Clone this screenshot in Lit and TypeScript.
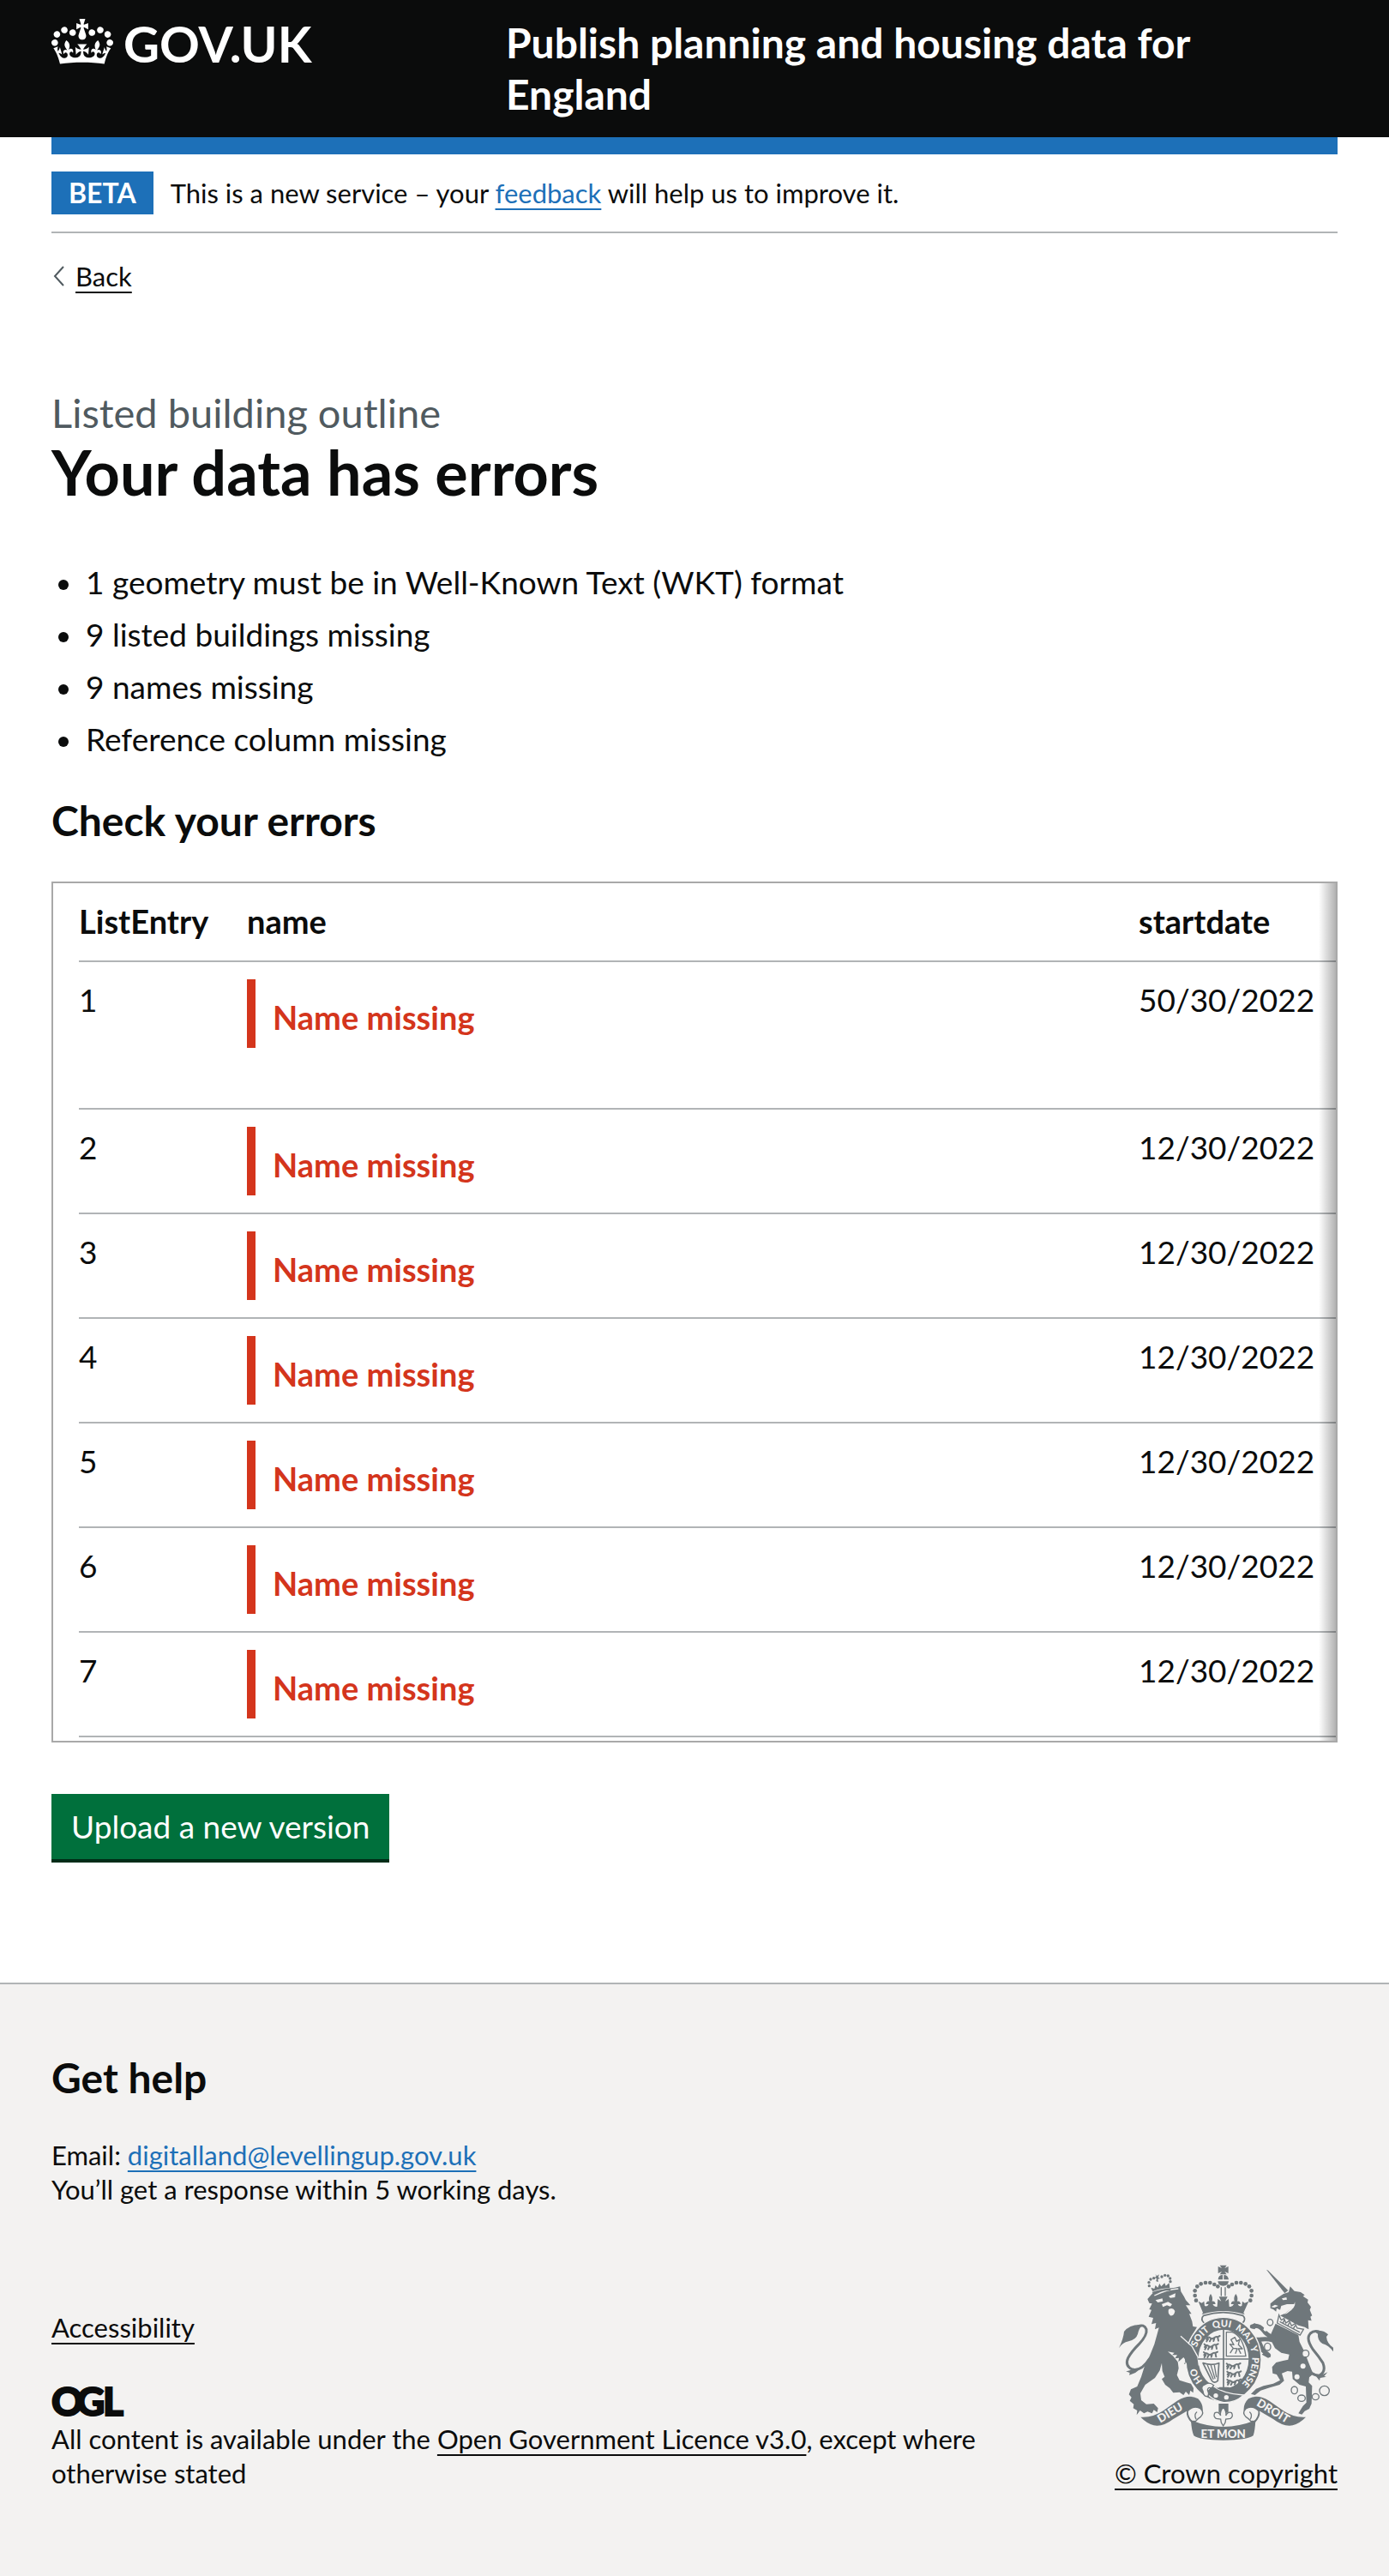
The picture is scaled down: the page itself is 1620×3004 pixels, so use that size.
import { LitElement, html, css, svg } from "lit";
import { customElement } from "lit/decorators.js";

interface EntryRow {
  entry: string;
  startDate: string;
  tall?: boolean;
}

const ISSUES = [
  "1 geometry must be in Well-Known Text (WKT) format",
  "9 listed buildings missing",
  "9 names missing",
  "Reference column missing",
];

const ROWS: EntryRow[] = [
  { entry: "1", startDate: "50/30/2022", tall: true },
  { entry: "2", startDate: "12/30/2022" },
  { entry: "3", startDate: "12/30/2022" },
  { entry: "4", startDate: "12/30/2022" },
  { entry: "5", startDate: "12/30/2022" },
  { entry: "6", startDate: "12/30/2022" },
  { entry: "7", startDate: "12/30/2022" },
];

const linkStyles = css`
  a {
    color: #0b0c0c;
    text-decoration: underline;
    text-decoration-thickness: 2px;
    text-underline-offset: 6px;
  }
  a:focus {
    outline: 6px solid #ffdd00;
    background: #ffdd00;
    color: #0b0c0c;
  }
  .link-blue {
    color: #1d70b8;
  }
`;

@customElement("gov-header")
export class GovHeader extends LitElement {
  static styles = css`
    :host {
      display: block;
      background: #0b0c0c;
      color: #fff;
      padding: 0 60px;
    }
    .inner {
      display: grid;
      grid-template-columns: 1fr 2fr;
      align-items: start;
    }
    .brand {
      display: flex;
      align-items: center;
      gap: 12px;
      padding-top: 16px;
      color: #fff;
      text-decoration: none;
      font-size: 58px;
      line-height: 70px;
      font-weight: 700;
    }
    .crown {
      width: 72px;
      height: 53px;
      margin-bottom: 6px;
      fill: #fff;
    }
    .service {
      padding: 20px 0 20px 30px;
      color: #fff;
      text-decoration: none;
      font-size: 48px;
      line-height: 60px;
      font-weight: 700;
    }
    .bar {
      height: 20px;
      background: #1d70b8;
      margin-bottom: -20px;
    }
  `;
  render() {
    return html`
      <header>
        <div class="inner">
          <a class="brand" href="#home">
            <svg class="crown" viewBox="0 0 132 97" aria-hidden="true">
              <path
                d="M25 30.2c3.5 1.5 7.7-.2 9.1-3.7 1.5-3.6-.2-7.8-3.9-9.2-3.6-1.4-7.6.3-9.1 3.9-1.4 3.5.3 7.5 3.9 9zM9 39.5c3.6 1.5 7.8-.2 9.2-3.7 1.5-3.6-.2-7.8-3.9-9.1-3.6-1.5-7.6.2-9.1 3.8-1.4 3.5.3 7.5 3.8 9zM4.4 57.2c3.5 1.5 7.7-.2 9.1-3.8 1.5-3.6-.2-7.7-3.9-9.1-3.5-1.5-7.6.3-9.1 3.8-1.4 3.5.3 7.6 3.9 9.1zm38.3-21.4c3.5 1.5 7.7-.2 9.1-3.8 1.5-3.6-.2-7.7-3.9-9.1-3.6-1.5-7.6.3-9.1 3.8-1.3 3.6.4 7.7 3.9 9.1zm64.4-5.6c-3.6 1.5-7.8-.2-9.1-3.7-1.5-3.6.2-7.8 3.8-9.2 3.6-1.4 7.7.3 9.2 3.9 1.3 3.5-.4 7.5-3.9 9zm15.9 9.3c-3.6 1.5-7.7-.2-9.1-3.7-1.5-3.6.2-7.8 3.7-9.1 3.6-1.5 7.7.2 9.2 3.8 1.5 3.5-.3 7.5-3.8 9zm4.7 17.7c-3.6 1.5-7.8-.2-9.2-3.8-1.5-3.6.2-7.7 3.9-9.1 3.6-1.5 7.7.3 9.2 3.8 1.3 3.5-.4 7.6-3.9 9.1zM89.3 35.8c-3.6 1.5-7.8-.2-9.2-3.8-1.4-3.6.2-7.7 3.9-9.1 3.6-1.5 7.7.3 9.2 3.8 1.4 3.6-.3 7.7-3.9 9.1zM69.7 17.7l8.9 4.7V9.3l-8.9 2.8c-.2-.3-.5-.6-.9-.9L72.4 0H59.6l3.5 11.2c-.3.3-.6.5-.9.9l-8.8-2.8v13.1l8.8-4.7c.3.3.6.7.9.9l-5 15.4v.1c-.2.8-.4 1.6-.4 2.4 0 4.1 3.1 7.5 7 8.1h.2c.3 0 .7.1 1 .1.4 0 .7 0 1-.1h.2c4-.6 7.1-4.1 7.1-8.1 0-.8-.1-1.7-.4-2.4V34l-5.1-15.4c.4-.2.7-.6 1-.9zM66 92.8c16.9 0 32.8 1.1 47.1 3.2 4-16.9 8.9-26.7 14-33.5l-9.6-3.4c1 4.9 1.1 7.2 0 10.2-1.5-1.4-3-4.3-4.2-8.7L108.6 76c2.8-2 5-3.2 7.5-3.3-4.4 9.4-10 11.9-13.6 11.2-4.3-.8-6.3-4.6-5.6-7.9 1-4.7 5.7-5.9 8-.5 4.3-8.7-3-11.4-7.6-8.8 7.1-7.2 7.9-13.5 2.1-21.1-8 6.1-8.1 12.3-4.5 20.8-4.7-5.4-12.1-2.5-9.5 6.2 3.4-5.2 7.9-2 7.2 3.1-.6 4.3-6.4 7.8-13.5 7.2-10.3-.9-10.9-8-11.2-13.8 2.5-.5 7.1 1.8 11 7.3L80.2 60c-4.1 4.4-8 5.3-12.3 5.4 1.4-4.4 8-11.6 8-11.6H55.5s6.4 7.2 7.9 11.6c-4.2-.1-8-1-12.3-5.4l1.4 16.4c3.9-5.5 8.5-7.7 10.9-7.3-.3 5.8-.9 12.8-11.1 13.8-7.2.6-12.9-2.9-13.5-7.2-.7-5 3.8-8.3 7.1-3.1 2.7-8.7-4.6-11.6-9.4-6.2 3.7-8.5 3.6-14.7-4.6-20.8-5.8 7.6-5 13.9 2.2 21.1-4.7-2.6-11.9.1-7.7 8.8 2.3-5.5 7.1-4.2 8.1.5.7 3.3-1.3 7.1-5.7 7.9-3.5.7-9-1.8-13.5-11.2 2.5.1 4.7 1.3 7.5 3.3l-4.7-15.4c-1.2 4.4-2.7 7.2-4.3 8.7-1.1-3-.9-5.3 0-10.2l-9.5 3.4c5 6.9 9.9 16.7 14 33.5 14.8-2.1 30.8-3.2 47.7-3.2z"
              />
            </svg>
            <span>GOV.UK</span>
          </a>
          <a class="service" href="#service">Publish planning and housing data for England</a>
        </div>
        <div class="bar"></div>
      </header>
    `;
  }
}

@customElement("error-table")
export class ErrorTable extends LitElement {
  static styles = css`
    :host {
      display: block;
      position: relative;
      border: 2px solid #a9a9a9;
    }
    .scroller {
      overflow-x: auto;
      padding: 0 0 4px 30px;
    }
    .shade {
      position: absolute;
      inset: 0 0 0 auto;
      width: 20px;
      background: linear-gradient(to right, transparent, rgba(0, 0, 0, 0.3));
      pointer-events: none;
    }
    table {
      width: 100%;
      table-layout: fixed;
      border-collapse: separate;
      border-spacing: 0;
    }
    .col-entry {
      width: 196px;
    }
    .col-date {
      width: 230px;
    }
    th,
    td {
      box-sizing: border-box;
      height: 122px;
      padding: 19px 0;
      border-bottom: 2px solid #b1b4b6;
      text-align: left;
      vertical-align: top;
      font-size: 37px;
      line-height: 50px;
      font-weight: 400;
    }
    th {
      height: 92px;
      font-size: 38px;
      font-weight: 700;
    }
    .tall td {
      height: 172px;
    }
    td.cell-error {
      padding-top: 20px;
    }
    .error {
      margin: 0;
      padding: 19px 0 11px 20px;
      border-left: 10px solid #d4351c;
      color: #d4351c;
      font-size: 38px;
      line-height: 50px;
      font-weight: 700;
    }
  `;
  render() {
    return html`
      <div class="scroller">
        <table aria-label="Errors by list entry">
          <colgroup>
            <col class="col-entry" />
            <col />
            <col class="col-date" />
          </colgroup>
          <thead>
            <tr>
              <th scope="col">ListEntry</th>
              <th scope="col">name</th>
              <th scope="col">startdate</th>
            </tr>
          </thead>
          <tbody>
            ${ROWS.map(
              (row) => html`
                <tr class=${row.tall ? "tall" : "regular"}>
                  <td>${row.entry}</td>
                  <td class="cell-error"><p class="error">Name missing</p></td>
                  <td>${row.startDate}</td>
                </tr>
              `
            )}
          </tbody>
        </table>
      </div>
      <div class="shade"></div>
    `;
  }
}

/* Half of the crown's pearls; the other half is mirrored about x = 437. */
const PEARLS = [
  [342, 183],
  [338, 166],
  [338, 149],
  [346, 134],
  [359, 125],
  [375, 121],
  [391, 121],
  [406, 127],
  [418, 134],
];

const LION_PEARLS = [
  [178, 132],
  [177, 120],
  [183, 109],
  [194, 105],
  [222, 100],
  [233, 95],
  [244, 97],
  [251, 106],
  [252, 117],
];

const RINGS = [
  [601, 260, 10, 11],
  [592, 345, 11, 13],
  [725, 369, 12, 12],
  [686, 497, 11, 13],
  [711, 525, 13, 11],
  [760, 520, 12, 11],
  [791, 499, 17, 17],
];

@customElement("royal-arms")
export class RoyalArms extends LitElement {
  static styles = css`
    :host {
      display: block;
      width: 250px;
    }
    svg {
      display: block;
      width: 100%;
      font-family: Lato, sans-serif;
      font-weight: 900;
    }
    .ink {
      fill: #6f777b;
    }
    .paper {
      fill: #f3f2f1;
    }
    .line {
      fill: none;
      stroke: #6f777b;
      stroke-width: 5;
      stroke-linecap: round;
      stroke-linejoin: round;
    }
    .fine {
      stroke-width: 4;
    }
    .beast {
      stroke-width: 6;
    }
    .tail {
      stroke-width: 9;
    }
    .leg {
      stroke-width: 15;
    }
    .gap {
      fill: none;
      stroke: #f3f2f1;
      stroke-width: 4;
    }
    .cut {
      stroke: #f3f2f1;
      stroke-width: 4;
    }
    .hollow {
      fill: #f3f2f1;
      stroke: #6f777b;
      stroke-width: 4;
    }
    .belt {
      font-size: 33px;
    }
    .motto {
      font-size: 40px;
    }
  `;

  private beasts(x: number, y: number) {
    return svg`<g transform="translate(${x} ${y})">
      <path class="line beast" d="M2 12q6-10 13-4t14 0 12-3l8-4M8 12l-5 8M18 12l-4 8M30 10l-3 9M42 8l2 10M6 6l-5-4" />
    </g>`;
  }

  private halfScroll() {
    return svg`
      <path class="ink" d="M148 591Q190 594 228 568L276 534Q318 508 349 527Q370 548 364 576Q344 552 318 565L262 598Q226 626 194 620Q168 612 148 591Z" />
      <path class="hollow" d="M312 570Q336 548 358 562Q372 576 358 590Q348 596 340 606Q334 604 328 606Q312 592 312 570Z" />
      <path class="line fine" d="M312 568Q306 590 330 612M344 574Q334 582 342 598" />`;
  }

  render() {
    return html`
      <svg viewBox="72 58 750 616" role="img" aria-label="Royal coat of arms">
        <defs>
          <path id="belt" d="M438 501A100 113 0 0 1 438 275A100 113 0 0 1 438 501" />
        </defs>

        <!-- lion tail -->
        <path class="line tail" d="M178 388Q150 432 118 424Q92 412 104 384Q116 362 142 336Q172 304 168 284Q160 264 138 274" />
        <path class="ink" d="M150 268Q110 266 90 292Q88 316 72 350Q84 330 106 326Q132 320 138 300Q142 282 150 274ZM88 428Q104 436 122 420L140 428Q132 436 120 440L108 444L110 436Z" />
        <!-- lion body -->
        <path
          class="ink"
          d="M190 158L236 142L268 138L286 134L289 152L300 170L306 182L322 200L306 200L326 230L318 230L328 256L331 274L345 276L336 292L328 306L320 318L330 340L344 364L351 392L347 414L338 404L335 418L326 406L318 416L314 402L300 406L306 392L298 382L280 398L282 384L268 386L276 374L258 374L266 366L243 362L262 378L278 398L281 420L275 444L284 462L308 470L324 474L333 490L332 506L322 498L318 514L306 502L298 514L284 504L262 506L250 490L234 478L222 458L232 450L224 430L222 402L215 428L198 454L164 478L147 508L150 532L168 546L194 544L209 560L206 574L194 566L188 578L172 572L160 578L146 568L134 584L136 568L122 560L124 546L110 534L116 522L107 512L114 494L136 484L150 450L162 412L180 376L196 336L206 300L212 278L198 284L202 262L186 266L192 244L176 240L186 216L178 214L188 194L178 192L172 178Z"
        />
        <path class="paper" d="M200 182L224 176L226 186L208 190ZM246 168L270 158L268 172L252 174ZM222 196L244 188L258 196L252 204L240 200L226 206ZM246 214Q262 206 268 220Q266 238 252 236Q242 228 246 214Z" />
        <path class="gap" d="M196 166Q240 144 280 142" />
        <!-- lion crown -->
        <path class="ink" d="M190 152L184 138L196 142L200 130L208 138L214 124L220 134L232 122L236 132L248 122L250 140Q218 140 190 152ZM192 160L188 154Q220 142 254 142L252 148Q220 148 192 160ZM200 90L204 98L212 92L210 102L216 106L208 108L210 118L202 116L204 106L196 104L202 100Z" />
        ${LION_PEARLS.map(([x, y]) => svg`<circle class="ink" cx=${x} cy=${y} r="5" />`)}

        <!-- unicorn tail -->
        <path class="line tail" d="M722 410Q742 444 772 446Q798 434 786 402Q772 380 752 356Q724 316 742 298Q756 286 776 294" />
        <path class="ink" d="M756 292Q784 282 804 302L798 310Q800 334 822 348L822 362Q806 340 784 334Q766 322 768 300ZM752 436L768 446Q786 444 802 434L790 448L798 450L776 454L774 464Z" />
        <!-- unicorn horn, head and mane -->
        <path class="ink" d="M588 75L594 78L664 148L652 158Z" />
        <path
          class="ink"
          d="M602 194L626 174L648 160L666 154L671 134L686 150L708 154L722 164L716 168L734 180L732 190L744 206L740 216L748 236L742 240L746 254L734 252L736 284L722 276L700 270L636 236L654 228L674 212L688 196L660 196L640 202L636 216L624 210L622 222L612 214L602 210Z"
        />
        <path class="paper" d="M642 176L658 172L660 180L646 182ZM604 206L618 198L630 202L616 208ZM688 188Q692 210 660 228L650 232Q684 206 688 188Z" />
        <!-- collar -->
        <path class="hollow" d="M632 234L640 252L650 246L656 262L668 254L676 272L688 264L696 280L718 284L706 304L626 262Z" />
        <path class="line fine" d="M636 258L704 294M650 252L646 262M668 262L664 270M688 272L682 282" />
        <!-- unicorn body -->
        <path
          class="ink"
          d="M620 264L700 304L704 328L722 364L734 396L746 426L752 440L738 452L736 470L748 482L746 544L738 562L722 570L712 582L700 578L716 552L728 540L726 484L704 478L680 458L678 432L662 430L642 438L650 464L634 478L600 488L568 498L548 514L534 510L552 492L578 482L612 474L636 462L624 442L610 438L608 416L622 400L646 394L664 390L668 372L640 366L618 350L606 326L604 300Z"
        />
        <path class="line leg" d="M612 312Q588 304 578 288Q560 266 538 274M612 322Q582 314 560 322L576 358L596 374" />
        <path class="ink" d="M530 278L546 262L560 272L546 284ZM584 362L604 380L594 384L572 372ZM548 312L570 312L562 330L546 326Z" />
        <circle class="paper" cx="585" cy="284" r="7" />
        <circle class="paper" cx="716" cy="413" r="9" />
        <circle class="paper" cx="695" cy="450" r="9" />
        ${RINGS.map(([x, y, rx, ry]) => svg`<ellipse class="hollow" cx=${x} cy=${y} rx=${rx} ry=${ry} />`)}

        <!-- imperial crown -->
        <path class="ink" d="M425 60L449 60L442 70L455 64L455 88L442 82L449 92L425 92L432 82L419 88L419 64L432 70Z" />
        <path class="ink" d="M419 110Q420 94 435 94V110ZM439 94Q454 94 456 110H439ZM418 116H456Q454 132 437 132Q420 132 418 116Z" />
        ${PEARLS.map(
          ([x, y]) => svg`<circle class="ink" cx=${x} cy=${y} r="7" /><circle class="ink" cx=${874 - x} cy=${y} r="7" />`
        )}
        <path class="line fine" d="M430 138V166M444 138V166" />
        <path
          class="ink"
          d="M350 186L362 192L370 186L372 202Q382 206 386 196L376 196Q380 184 388 186Q384 172 393 160Q402 172 398 186Q408 184 410 196L400 196Q406 208 416 204L418 178L430 186L422 170L452 170L444 186L456 178L458 204Q468 208 474 196L464 196Q466 184 476 186Q472 172 481 160Q490 172 486 186Q496 184 498 196L488 196Q492 206 502 202L504 186L512 192L526 186L508 226L512 232Q437 208 362 232L366 226Z"
        />
        <path class="line" d="M368 236Q437 214 506 236Q518 248 506 260M368 236Q356 248 370 262" />

        <!-- belt -->
        <ellipse class="ink cut" cx="438" cy="390" rx="132" ry="148" />
        <ellipse class="hollow" cx="438" cy="388" rx="90" ry="105" />
        <g class="paper belt">
          <text><textPath href="#belt" startOffset="84">HO</textPath></text>
          <text><textPath href="#belt" startOffset="208">SOIT</textPath></text>
          <text><textPath href="#belt" startOffset="298">QUI</textPath></text>
          <text><textPath href="#belt" startOffset="376">MAL</textPath></text>
          <text><textPath href="#belt" startOffset="458">Y</textPath></text>
          <text><textPath href="#belt" startOffset="496">PENSE</textPath></text>
        </g>
        <!-- lion paw resting on the belt -->
        <path class="ink" d="M292 312L326 346L346 380L350 408L342 416L334 406L326 416L314 408L304 398L300 370Z" />
        <path class="gap" d="M288 308L328 344L348 380L352 410" />
        <!-- quarters -->
        <path class="line" d="M438 284V494M350 388H526" />
        ${this.beasts(376, 306)} ${this.beasts(370, 334)} ${this.beasts(368, 362)} ${this.beasts(448, 402)}
        ${this.beasts(450, 430)} ${this.beasts(450, 458)}
        <path class="line fine" d="M448 294H468Q506 306 516 378H448ZM462 366L472 350L460 336L474 338L464 320L478 312L484 326L494 320L490 338L504 352L490 352L498 368M472 350L486 352L480 368" />
        <path class="line" d="M366 402Q396 412 422 402L418 464Q404 476 396 462Q380 430 366 402Z" />
        <path class="line fine" d="M382 410L402 458M394 410L408 456M406 410L413 450" />

        <!-- strap and buckle -->
        <path class="ink cut" d="M398 480Q438 510 508 514Q480 542 438 540Q396 532 376 504Z" />
        <circle class="paper" cx="411" cy="516" r="8" />
        <circle class="paper" cx="448" cy="522" r="8" />
        <path class="hollow" d="M366 500Q356 484 372 478Q388 466 404 480L396 490Q384 484 382 496Q388 508 384 518Q368 522 366 500Z" />
        <path class="ink" d="M424 486H456L464 492Q440 500 416 492Z" />

        <!-- pendant -->
        <path class="ink" d="M421 544H455V576H421Z" />
        <path class="hollow" d="M437 556Q450 572 446 586Q454 570 466 576Q474 588 462 596L446 598L444 610L437 622L430 610L428 598L412 596Q400 588 408 576Q420 570 428 586Q424 572 437 556Z" />

        <!-- motto scroll -->
        ${this.halfScroll()}
        <g transform="translate(874 0) scale(-1 1)">${this.halfScroll()}</g>
        <path class="ink" d="M324 602Q437 648 550 602Q548 640 542 656Q520 672 437 672Q354 672 334 656Q326 638 324 602Z" />
        <g class="paper motto">
          <text transform="translate(217 612) rotate(-31)">DIEU</text>
          <text transform="translate(437 663)" text-anchor="middle">ET MON</text>
          <text transform="translate(551 549) rotate(31)">DROIT</text>
        </g>
      </svg>
    `;
  }
}

@customElement("gov-footer")
export class GovFooter extends LitElement {
  static styles = [
    linkStyles,
    css`
      :host {
        display: block;
        flex: 1;
        background: #f3f2f1;
        border-top: 2px solid #b1b4b6;
        padding: 79px 60px 100px;
      }
      h2 {
        margin: 0 0 40px;
        font-size: 48px;
        line-height: 60px;
        font-weight: 700;
      }
      p {
        margin: 0;
      }
      .meta {
        display: flex;
        align-items: flex-end;
        gap: 30px;
        margin-top: 68px;
      }
      .main {
        flex: 1;
      }
      .ogl {
        display: block;
        width: 86px;
        height: 50px;
        margin-top: 40px;
        overflow: visible;
        font-family: Lato, sans-serif;
        font-size: 46px;
        font-weight: 900;
        fill: #0b0c0c;
        stroke: #0b0c0c;
        stroke-width: 2;
      }
      .crest {
        display: flex;
        flex-direction: column;
        align-items: center;
        gap: 18px;
      }
    `,
  ];
  render() {
    return html`
      <footer>
        <h2>Get help</h2>
        <p>Email: <a class="link-blue" href="mailto:digitalland@levellingup.gov.uk">digitalland@levellingup.gov.uk</a></p>
        <p>You’ll get a response within 5 working days.</p>
        <div class="meta">
          <div class="main">
            <a href="#accessibility">Accessibility</a>
            <svg class="ogl" viewBox="0 0 86 50" role="img" aria-label="Open Government Licence">
              <text x="0 29 60" y="43">OGL</text>
            </svg>
            <p>
              All content is available under the
              <a href="#licence">Open Government Licence v3.0</a>, except where otherwise stated
            </p>
          </div>
          <div class="crest">
            <royal-arms></royal-arms>
            <a href="#copyright">© Crown copyright</a>
          </div>
        </div>
      </footer>
    `;
  }
}

@customElement("app-root")
export class AppRoot extends LitElement {
  static styles = [
    linkStyles,
    css`
      :host {
        display: flex;
        flex-direction: column;
        min-height: 100vh;
        background: #fff;
        color: #0b0c0c;
        font-family: Lato, "Liberation Sans", sans-serif;
        font-size: 31px;
        line-height: 40px;
      }
      .content {
        padding: 20px 60px 144px;
      }
      .phase {
        display: flex;
        align-items: center;
        gap: 20px;
        margin: 0;
        padding: 20px 0;
        border-bottom: 2px solid #b1b4b6;
      }
      .tag {
        padding: 0 20px;
        background: #1d70b8;
        color: #fff;
        font-size: 32px;
        line-height: 50px;
        font-weight: 700;
      }
      .back {
        display: flex;
        align-items: center;
        gap: 12px;
        margin-top: 30px;
      }
      .chevron {
        width: 16px;
        height: 24px;
        fill: none;
        stroke: #505a5f;
        stroke-width: 2;
      }
      main {
        padding-top: 110px;
      }
      .caption {
        display: block;
        color: #505a5f;
        font-size: 47px;
        line-height: 58px;
      }
      h1 {
        margin: 0 0 64px;
        font-size: 72px;
        line-height: 80px;
        font-weight: 700;
      }
      .issues {
        display: flex;
        flex-direction: column;
        gap: 11px;
        margin: 0 0 40px;
        padding: 0 0 0 8px;
        list-style: none;
        font-size: 37px;
        line-height: 50px;
      }
      .issues li {
        display: flex;
        align-items: center;
        gap: 20px;
      }
      .issues li::before {
        content: "";
        width: 12px;
        height: 12px;
        margin-top: 6px;
        border-radius: 50%;
        background: #0b0c0c;
      }
      h2 {
        margin: 0 0 41px;
        font-size: 48px;
        line-height: 60px;
        font-weight: 700;
      }
      .upload {
        display: block;
        margin-top: 60px;
        padding: 18px 23px;
        border: 0;
        border-radius: 0;
        background: #00703c;
        box-shadow: 0 4px 0 #002d18;
        color: #fff;
        font-family: inherit;
        font-size: 37px;
        line-height: 40px;
      }
    `,
  ];
  render() {
    return html`
      <gov-header></gov-header>
      <div class="content">
        <div class="phase">
          <strong class="tag">BETA</strong>
          <span>This is a new service – your <a class="link-blue" href="#feedback">feedback</a> will help us to improve it.</span>
        </div>
        <div class="back">
          <svg class="chevron" viewBox="0 0 16 24" aria-hidden="true"><path d="M14 1L4 12l10 11" /></svg>
          <a href="#back">Back</a>
        </div>
        <main>
          <span class="caption">Listed building outline</span>
          <h1>Your data has errors</h1>
          <ul class="issues">
            ${ISSUES.map((issue) => html`<li>${issue}</li>`)}
          </ul>
          <h2>Check your errors</h2>
          <error-table></error-table>
          <button class="upload" type="button">Upload a new version</button>
        </main>
      </div>
      <gov-footer></gov-footer>
    `;
  }
}
